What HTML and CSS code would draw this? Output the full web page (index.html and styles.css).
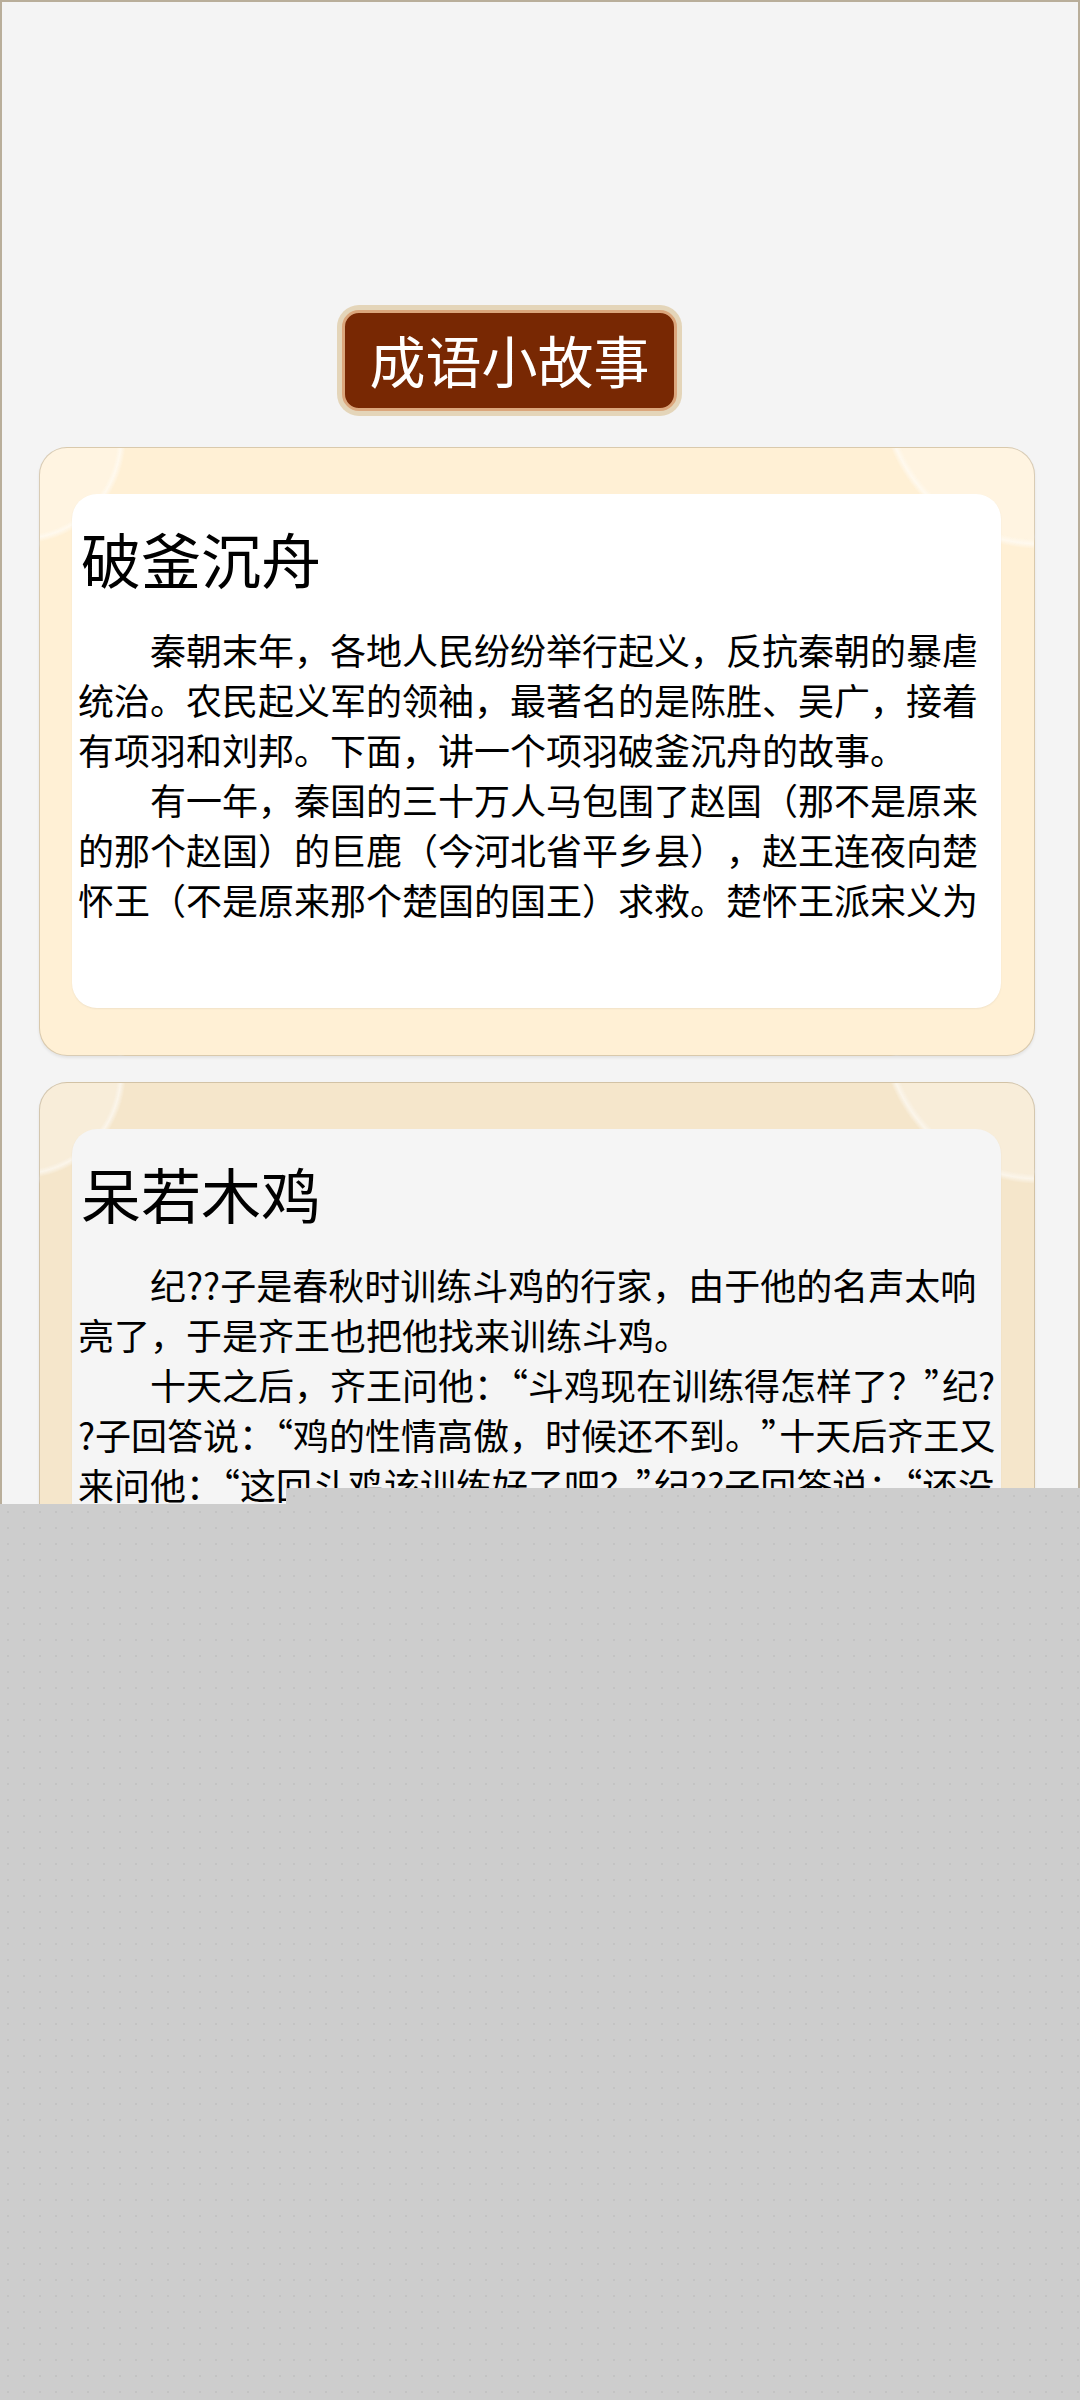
FILE: index.html
```html
<!DOCTYPE html>
<html lang="zh-CN">
<head>
<meta charset="utf-8">
<title>成语小故事</title>
<link rel="stylesheet" href="styles.css">
</head>
<body>
<div class="page">
  <div class="screen">
    <header class="top">
      <div class="badge">成语小故事</div>
    </header>
    <main class="list">
      <article class="card card-warm">
        <div class="panel panel-white">
          <h2 class="title">破釜沉舟</h2>
          <div class="story">
            <p>秦朝末年，各地人民纷纷举行起义，反抗秦朝的暴虐统治。农民起义军的领袖，最著名的是陈胜、吴广，接着有项羽和刘邦。下面，讲一个项羽破釜沉舟的故事。</p>
            <p>有一年，秦国的三十万人马包围了赵国（那不是原来的那个赵国）的巨鹿（今河北省平乡县），赵王连夜向楚怀王（不是原来那个楚国的国王）求救。楚怀王派宋义为</p>
          </div>
        </div>
      </article>
      <article class="card card-beige">
        <div class="panel panel-grey">
          <h2 class="title">呆若木鸡</h2>
          <div class="story">
            <p>纪??子是春秋时训练斗鸡的行家，由于他的名声太响亮了，于是齐王也把他找来训练斗鸡。</p>
            <p>十天之后，齐王问他：<span class="q">“</span>斗鸡现在训练得怎样了？<span class="q">”</span>纪??子回答说：<span class="q">“</span>鸡的性情高傲，时候还不到。<span class="q">”</span>十天后齐王又来问他：<span class="q">“</span>这回斗鸡该训练好了吧？<span class="q">”</span>纪??子回答说：<span class="q">“</span>还没</p>
          </div>
        </div>
      </article>
    </main>
  </div>
  <div class="loading loading-a"></div>
  <div class="loading loading-b"></div>
</div>
</body>
</html>
```

FILE: styles.css
```css
html, body {
  margin: 0;
  padding: 0;
  background: #f4f4f4;
}

body {
  font-family: "Noto Sans CJK SC", "Noto Sans", sans-serif;
  color: #000;
}

.page {
  position: relative;
  width: 1080px;
  height: 2400px;
  overflow: hidden;
}

.screen {
  box-sizing: border-box;
  width: 1080px;
  height: 2400px;
  border: 2px solid #b9ae9a;
  background: #f4f4f4;
  padding-top: 308px;
  overflow: hidden;
}

.top {
  display: flex;
  padding-left: 340px;
}

.badge {
  box-sizing: border-box;
  width: 335px;
  height: 101px;
  border: 3px solid #dba67c;
  border-radius: 17px;
  box-shadow: 0 0 0 5px #e4d5b9;
  background: #782803;
  color: #fff;
  font-size: 56px;
  display: flex;
  align-items: center;
  justify-content: center;
  padding-bottom: 5px;
}

.list {
  display: flex;
  flex-direction: column;
  gap: 26px;
  margin-top: 36px;
  padding-left: 37px;
}

.card {
  box-sizing: border-box;
  width: 996px;
  height: 609px;
  border: 1px solid rgba(120, 100, 70, 0.28);
  border-radius: 28px;
  padding: 46px 33px 0 32px;
  box-shadow: 0 2px 3px rgba(0, 0, 0, 0.07);
  flex: none;
}

.card-warm {
  background:
    radial-gradient(circle 105px at -20px -10px, rgba(255,255,255,0.28) 0 97px, rgba(255,255,255,0.6) 101px, rgba(255,255,255,0) 106px),
    radial-gradient(circle 160px at 1000px -60px, rgba(255,255,255,0.28) 0 151px, rgba(255,255,255,0.6) 156px, rgba(255,255,255,0) 161px),
    #fff0d5;
}

.card-beige {
  background:
    radial-gradient(circle 105px at -20px -10px, rgba(255,255,255,0.28) 0 97px, rgba(255,255,255,0.6) 101px, rgba(255,255,255,0) 106px),
    radial-gradient(circle 160px at 1000px -60px, rgba(255,255,255,0.28) 0 151px, rgba(255,255,255,0.6) 156px, rgba(255,255,255,0) 161px),
    #f5e6cb;
}

.panel {
  box-sizing: border-box;
  height: 514px;
  border-radius: 25px;
  padding: 29px 0 0 6px;
  overflow: hidden;
  box-shadow: 0 1px 2px rgba(0, 0, 0, 0.06);
}

.panel-white {
  background: #ffffff;
}

.panel-grey {
  background: #f5f5f5;
}

.title {
  margin: 0 0 31px 3px;
  font-size: 60px;
  line-height: 70px;
  font-weight: 400;
  color: #000;
}

.story {
  width: 923px;
  max-height: 300px;
  overflow: hidden;
  font-size: 36px;
  line-height: 50px;
  line-break: anywhere;
  text-spacing-trim: space-all;
  color: #000;
}

.story p {
  margin: 0;
  text-indent: 2em;
}

.q {
  font-feature-settings: "halt" 1;
}

.loading {
  position: absolute;
  background-color: #cdcdcd;
  background-image: radial-gradient(circle, rgba(0, 0, 0, 0.05) 1px, rgba(0, 0, 0, 0) 1.6px);
  background-size: 16px 16px;
}

.loading-a {
  left: 286px;
  top: 1488px;
  right: 0;
  bottom: 0;
}

.loading-b {
  left: 0;
  top: 1504px;
  width: 290px;
  bottom: 0;
}
```
